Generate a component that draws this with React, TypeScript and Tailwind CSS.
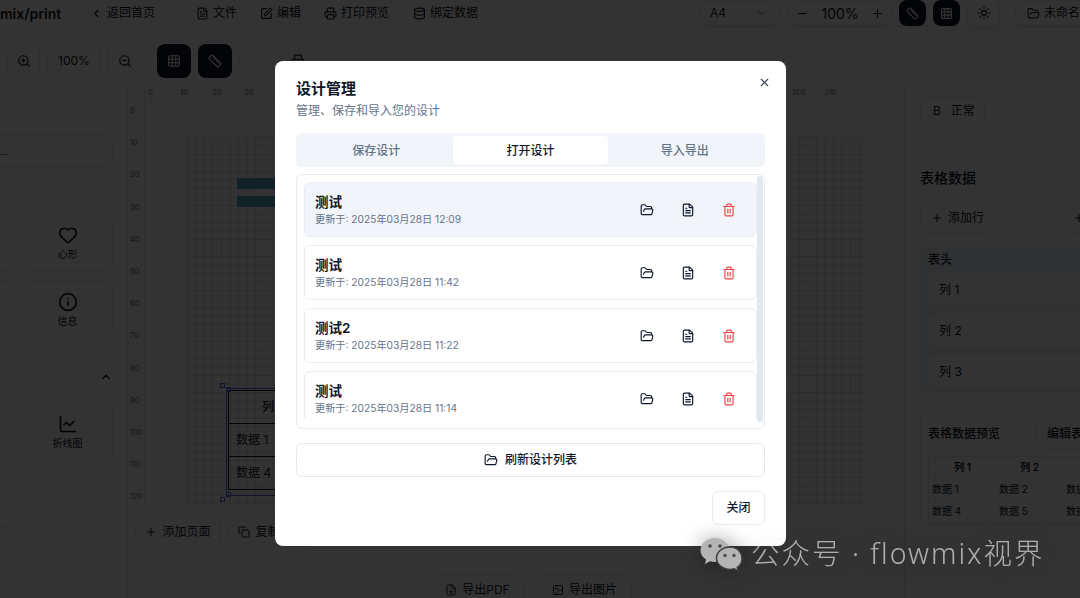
import { ChevronLeft, ChevronDown, ChevronUp, FileText, SquarePen, Printer, Database, ZoomIn, ZoomOut, Grid3x3, Ruler, Minus, Plus, Sun, FolderOpen, Trash2, X, Heart, Info, ChartLine, Copy, FileDown, Image } from "lucide-react";

const rows = [
  { name: "测试", date: "更新于: 2025年03月28日 12:09", active: true },
  { name: "测试", date: "更新于: 2025年03月28日 11:42" },
  { name: "测试2", date: "更新于: 2025年03月28日 11:22" },
  { name: "测试", date: "更新于: 2025年03月28日 11:14" },
];

const hTicks = [0, 10, 20, 30, 200, 210];
const vTicks = Array.from({ length: 13 }, (_, i) => i * 10);

function Tile({ icon, label }: { icon?: React.ReactNode; label?: string }) {
  return (
    <div className="h-[59px] rounded-lg border border-[#e2e8f0] flex flex-col items-center justify-center gap-[3px] text-[10px] text-[#0f172a]">
      {icon}
      {label && <span className="leading-[13px]">{label}</span>}
    </div>
  );
}

function HeadItem({ icon, label, className }: { icon: React.ReactNode; label: string; className: string }) {
  return (
    <div className={"flex items-center gap-[4px] text-[12px] text-[#0f172a] whitespace-nowrap " + className}>
      {icon}
      <span>{label}</span>
    </div>
  );
}

function Background() {
  return (
    <div className="flex flex-col h-full">
      <header className="h-[27px] shrink-0 border-b border-[#e2e8f0] flex items-center relative">
        <span className="text-[14px] font-semibold text-[#0f172a] w-[90px] shrink-0">mix/print</span>
        <HeadItem icon={<ChevronLeft size={13} />} label="返回首页" className="w-[106px] shrink-0" />
        <HeadItem icon={<FileText size={13} />} label="文件" className="w-[64px] shrink-0" />
        <HeadItem icon={<SquarePen size={13} />} label="编辑" className="w-[64px] shrink-0" />
        <HeadItem icon={<Printer size={13} />} label="打印预览" className="w-[89px] shrink-0" />
        <HeadItem icon={<Database size={13} />} label="绑定数据" className="w-[286px] shrink-0" />
        <div className="w-[81px] h-[26px] shrink-0 border border-[#e2e8f0] rounded-lg flex items-center justify-between pl-[10px] pr-[12px] text-[12px] text-[#0f172a]">
          A4 <ChevronDown size={12} className="opacity-50" />
        </div>
        <div className="ml-[8px] w-[104px] h-[26px] shrink-0 border border-[#e2e8f0] rounded-lg flex items-center justify-between px-[7px] text-[14px] text-[#0f172a]">
          <Minus size={13} /> <span>100%</span> <Plus size={13} />
        </div>
        <div className="ml-[7px] w-[27px] h-[26px] shrink-0 bg-[#0f172a] rounded-lg flex items-center justify-center text-white"><Ruler size={13} /></div>
        <div className="ml-[7px] w-[27px] h-[26px] shrink-0 bg-[#0f172a] rounded-lg flex items-center justify-center text-white"><Grid3x3 size={13} /></div>
        <div className="ml-[7px] w-[33px] h-[32px] shrink-0 border border-[#e2e8f0] rounded-lg flex items-center justify-center text-[#0f172a]"><Sun size={14} /></div>
        <div className="ml-[15px] w-[90px] h-[26px] shrink-0 overflow-hidden border border-[#e2e8f0] rounded-lg flex items-center gap-[4px] pl-[11px] text-[12px] text-[#0f172a] whitespace-nowrap">
          <FolderOpen size={13} className="shrink-0" /> 未命名设计
        </div>
      </header>

      <div className="h-[58px] shrink-0 border-b border-[#eef2f6] flex items-start pt-[17px] pl-[7px] text-[#0f172a]">
        <div className="w-[33px] h-[34px] border border-[#e2e8f0] rounded-lg flex items-center justify-center"><ZoomIn size={14} /></div>
        <div className="ml-[7px] w-[54px] h-[34px] border border-[#e2e8f0] rounded-lg flex items-center justify-center text-[12px]">100%</div>
        <div className="ml-[7px] w-[34px] h-[34px] border border-[#e2e8f0] rounded-lg flex items-center justify-center"><ZoomOut size={14} /></div>
        <div className="ml-[15px] w-[34px] h-[34px] bg-[#0f172a] rounded-lg flex items-center justify-center text-white"><Grid3x3 size={14} /></div>
        <div className="ml-[7px] w-[34px] h-[34px] bg-[#0f172a] rounded-lg flex items-center justify-center text-white"><Ruler size={14} /></div>
        <div className="ml-[7px] w-[27px] h-[31px] border border-[#e2e8f0] rounded-lg" />
        <div className="ml-[15px] w-[33px] h-[34px] border border-[#e2e8f0] rounded-lg flex items-center justify-center"><Printer size={14} /></div>
      </div>

      <div className="flex flex-1 min-h-0">
        <aside className="w-[128px] shrink-0 overflow-hidden border-r border-[#e2e8f0] relative">
          <div className="h-[33px] mt-[50px] -ml-[40px] mr-[14px] border border-[#e2e8f0] rounded-lg flex items-center justify-end pr-[104px] text-[9px] text-[#0f172a]">...</div>
          <div className="mt-[45px] -ml-[77px] grid grid-cols-[91px_91px] gap-[8px]">
            <Tile />
            <Tile icon={<Heart size={20} />} label="心形" />
            <Tile />
            <Tile icon={<Info size={20} />} label="信息" />
          </div>
          <div className="h-[63px] flex items-center justify-end pr-[14px] pt-[13px] text-[#0f172a]"><ChevronUp size={14} /></div>
          <div className="-ml-[77px] grid grid-cols-[91px_91px] gap-[8px]">
            <Tile />
            <Tile icon={<ChartLine size={20} />} label="折线图" />
            <Tile />
          </div>
          <div className="mt-[14px] mr-[14px] border-t border-[#e2e8f0]" />
        </aside>

        <main className="w-[777px] shrink-0 flex flex-col min-h-0 border-r border-[#e2e8f0]">
          <div className="relative h-[425px] shrink-0 overflow-hidden">
            <div className="absolute left-0 right-0 top-0 h-[17px] border-b border-[#e2e8f0]" />
            <div className="absolute left-0 top-0 bottom-0 w-[17px] border-r border-[#e2e8f0]" />
            {hTicks.map((t) => (
              <span key={t} className="absolute top-[3px] text-[7.5px] leading-[10px] text-[#64748b]" style={{ left: 20 + t * 3.22 }}>{t}</span>
            ))}
            {vTicks.map((t) => (
              <span key={t} className="absolute left-[2px] text-[7.5px] leading-[10px] text-[#64748b]" style={{ top: 21 + t * 3.22 }}>{t}</span>
            ))}
            <div className="absolute left-[59px] top-[52px] w-[680px] h-[370px] bg-[linear-gradient(#d8dfe8_1px,transparent_1px),linear-gradient(90deg,#d8dfe8_1px,transparent_1px)] bg-[size:8.5px_8.5px]" />
            <div className="absolute left-[109px] top-[93px] w-[80px] h-[11px] bg-[#4fa8bc]" />
            <div className="absolute left-[109px] top-[111px] w-[80px] h-[11px] bg-[#4fa8bc]" />
            <div className="absolute left-[98px] top-[303px] w-[160px] h-[108px] border border-[#4f63d9]">
              <div className="ml-[1px] mt-[1px] border border-[#111827] text-[12px] text-[#0f172a]">
                <div className="h-[33px] border-b border-[#111827] flex items-center pl-[33px] font-medium">列</div>
                <div className="h-[33px] border-b border-[#111827] flex items-center pl-[7px]">数据 1</div>
                <div className="h-[32px] flex items-center pl-[7px]">数据 4</div>
              </div>
              <div className="absolute -left-[7px] -top-[6px] w-[5px] h-[5px] border border-[#4f63d9]" />
              <div className="absolute -left-[1px] -top-[2px] w-[5px] h-[5px] border border-[#4f63d9]" />
              <div className="absolute -left-[1px] -bottom-[2px] w-[5px] h-[5px] border border-[#4f63d9]" />
              <div className="absolute -left-[7px] -bottom-[7px] w-[5px] h-[5px] border border-[#4f63d9]" />
            </div>
          </div>
          <div className="flex gap-[7px] pl-[7px] mt-[7px] text-[12px] text-[#0f172a]">
            <div className="w-[86px] h-[30px] border border-[#e2e8f0] rounded-lg flex items-center justify-center gap-[5px]"><Plus size={12} />添加页面</div>
            <div className="w-[86px] h-[30px] border border-[#e2e8f0] rounded-lg flex items-center justify-center gap-[5px]"><Copy size={12} />复制页面</div>
          </div>
          <div className="mt-[28px] flex gap-[12px] pl-[302px] text-[12px] text-[#0f172a]">
            <div className="w-[95px] h-[30px] border border-[#e2e8f0] rounded-lg flex items-center justify-center gap-[5px]"><FileDown size={12} />导出PDF</div>
            <div className="w-[95px] h-[30px] border border-[#e2e8f0] rounded-lg flex items-center justify-center gap-[5px]"><Image size={12} />导出图片</div>
          </div>
        </main>

        <aside className="flex-1 overflow-hidden text-[#0f172a]">
          <div className="w-[300px] pl-[15px]">
            <div className="mt-[11px] w-[65px] h-[29px] border border-[#e2e8f0] rounded-lg flex items-center pl-[12px] gap-[10px] text-[12px]"><span>B</span><span>正常</span></div>
            <div className="mt-[43px] text-[14px] leading-[20px] font-medium">表格数据</div>
            <div className="mt-[15px] flex gap-[67px] text-[12px]">
              <div className="w-[75px] h-[30px] border border-[#e2e8f0] rounded-lg flex items-center justify-center gap-[5px]"><Plus size={12} />添加行</div>
              <div className="w-[75px] h-[30px] border border-[#e2e8f0] rounded-lg flex items-center justify-center gap-[5px]"><Plus size={12} />添加列</div>
            </div>
            <div className="mt-[13px] w-[280px] h-[148px] bg-[#f1f5f9] rounded-lg px-[8px] pt-[5px]">
              <div className="text-[12px] leading-[18px] font-medium">表头</div>
              <div className="mt-[4px] flex flex-col gap-[8px] text-[12px]">
                <div className="h-[33px] bg-white rounded-lg flex items-center pl-[11px]">列 1</div>
                <div className="h-[33px] bg-white rounded-lg flex items-center pl-[11px]">列 2</div>
                <div className="h-[33px] bg-white rounded-lg flex items-center pl-[11px]">列 3</div>
              </div>
            </div>
            <div className="mt-[15px] w-[280px] h-[116px] border border-[#e2e8f0] rounded-lg pl-[7px] pt-[9px]">
              <div className="flex items-center h-[30px] text-[12px] font-medium">
                <span className="w-[107px]">表格数据预览</span>
                <div className="w-[100px] h-[30px] border border-[#e2e8f0] rounded-lg flex items-center pl-[11px] whitespace-nowrap">编辑表格数据</div>
              </div>
              <div className="mt-[7px] grid grid-cols-[67px_67px_67px] text-[10px] leading-[21px] border border-[#e2e8f0]">
                <div className="text-center font-semibold">列 1</div><div className="text-center font-semibold">列 2</div><div className="text-center font-semibold">列 3</div>
                <div className="pl-[3px] border-t border-[#e2e8f0]">数据 1</div><div className="pl-[3px] border-t border-[#e2e8f0]">数据 2</div><div className="pl-[3px] border-t border-[#e2e8f0]">数据 3</div>
                <div className="pl-[3px] border-t border-[#e2e8f0]">数据 4</div><div className="pl-[3px] border-t border-[#e2e8f0]">数据 5</div><div className="pl-[3px] border-t border-[#e2e8f0]">数据 6</div>
              </div>
            </div>
          </div>
        </aside>
      </div>
    </div>
  );
}

function Modal() {
  return (
    <div className="absolute left-[275px] top-[61px] w-[511px] h-[485px] bg-white rounded-lg pt-[18px] px-[21px] text-[#0f172a]">
      <button className="absolute right-[15px] top-[15px] text-[#334155]"><X size={13} /></button>
      <h2 className="text-[15px] leading-[20px] font-semibold">设计管理</h2>
      <p className="mt-[3px] text-[12px] leading-[18px] text-[#64748b]">管理、保存和导入您的设计</p>
      <div className="mt-[13px] h-[34px] rounded-md bg-[#f1f5f9] grid grid-cols-3 p-[3px] text-[12px] font-medium text-[#64748b]">
        <div className="flex items-center justify-center pt-[1px]">保存设计</div>
        <div className="flex items-center justify-center pt-[1px] rounded-[4px] bg-white text-[#0f172a]">打开设计</div>
        <div className="flex items-center justify-center pt-[1px]">导入导出</div>
      </div>
      <div className="relative mt-[7px] h-[255px] rounded-md border border-[#e9edf3] pl-[7px] pt-[7px]">
        <div className="h-[236px] w-[453px] overflow-hidden flex flex-col gap-[8px]">
          {rows.map((r, i) => (
            <div key={i} className={"h-[55px] shrink-0 rounded-md border border-[#e9edf3] flex items-center pl-[10px] pr-[7px] " + (r.active ? "bg-[#f1f5f9]" : "bg-white")}>
              <div>
                <div className="text-[13.5px] leading-[18px] font-semibold">{r.name}</div>
                <div className="mt-[1px] text-[10.2px] leading-[15px] text-[#64748b]">{r.date}</div>
              </div>
              <div className="ml-auto flex items-center">
                <div className="w-[41px] flex justify-center"><FolderOpen size={14} strokeWidth={2} /></div>
                <div className="w-[41px] flex justify-center"><FileText size={14} strokeWidth={2} /></div>
                <div className="w-[41px] flex justify-center text-[#ef4444]"><Trash2 size={14} strokeWidth={2} /></div>
              </div>
            </div>
          ))}
        </div>
        <div className="absolute right-[1px] top-[1px] w-[6px] h-[246px] rounded-full bg-[#e2e8f0]" />
      </div>
      <button className="mt-[14px] w-full h-[34px] rounded-md border border-[#e2e8f0] flex items-center justify-center gap-[7px] text-[12px] font-medium">
        <FolderOpen size={14} strokeWidth={2} />刷新设计列表
      </button>
      <div className="mt-[14px] flex justify-end">
        <button className="w-[53px] h-[34px] rounded-md border border-[#e9edf3] text-[12px] font-medium">关闭</button>
      </div>
    </div>
  );
}

function Watermark() {
  return (
    <div className="absolute left-[700px] top-[534px] flex items-center gap-[8px] text-white/60 drop-shadow-[0_0_10px_rgba(0,0,0,0.35)]">
      <svg width="43" height="38" viewBox="0 0 43 38">
        <path d="M15 4C7 4 0.5 9.5 0.5 16.200c0 3.900 2.200 7.200 5.500 9.400L5 30l5-2.700c1.600.4 3.300.7 5 .7 8 0 14.500-5.300 14.500-11.800S23 4 15 4z" fill="#b4b4b4" />
        <circle cx="10" cy="12" r="1.800" fill="#4a4a4a" />
        <circle cx="20" cy="12" r="1.800" fill="#4a4a4a" />
        <path d="M30 13c-7.500 0-13.500 5-13.500 11.200S22.500 35.400 30 35.400c1.500 0 2.900-.2 4.200-.6l4 2.200-.9-3.600c3-2 4.700-5 4.700-8.200C42 18 37.500 13 30 13z" fill="#b4b4b4" stroke="#3c3c3c" strokeWidth="1.500" />
        <circle cx="25" cy="21.500" r="1.700" fill="#4a4a4a" />
        <circle cx="34" cy="21.500" r="1.700" fill="#4a4a4a" />
      </svg>
      <span className="text-[28.5px] leading-[38px] tracking-[2px] whitespace-nowrap font-['Noto_Sans','Noto_Sans_CJK_SC',sans-serif] font-light">公众号 · flowmix视界</span>
    </div>
  );
}

export default function App() {
  return (
    <div className="relative w-[1080px] h-[598px] overflow-hidden bg-white font-['Inter','Noto_Sans_CJK_SC',sans-serif]">
      <Background />
      <div className="absolute inset-0 bg-black/80" />
      <Modal />
      <Watermark />
    </div>
  );
}
